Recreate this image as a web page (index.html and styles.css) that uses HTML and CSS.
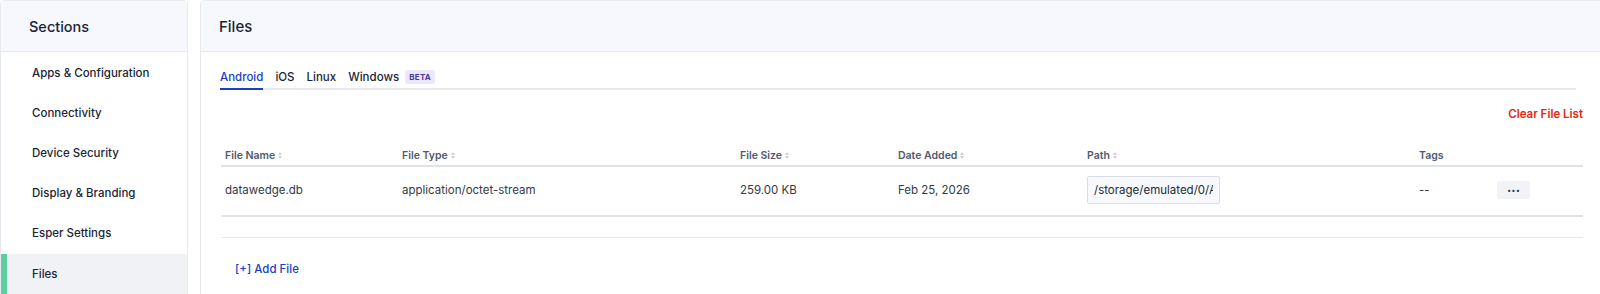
FILE: index.html
```html
<!DOCTYPE html>
<html lang="en">
<head>
  <meta charset="UTF-8" />
  <title>Files</title>
  <link rel="stylesheet" href="styles.css">
</head>
<body>

<div class="sidebar">
  <div class="card-head">Sections</div>
  <div class="nav-list">
    <div class="nav-item">Apps &amp; Configuration</div>
    <div class="nav-item">Connectivity</div>
    <div class="nav-item">Device Security</div>
    <div class="nav-item">Display &amp; Branding</div>
    <div class="nav-item">Esper Settings</div>
    <div class="nav-item active">Files</div>
  </div>
</div>

<div class="main">
  <div class="card-head main-head">Files</div>
  <div class="main-body">
    <div class="tabs">
      <div class="tab active">Android</div>
      <div class="tab">iOS</div>
      <div class="tab">Linux</div>
      <div class="tab">Windows <span class="beta">BETA</span></div>
    </div>

    <div class="toolbar">
      <span class="clear-link">Clear File List</span>
    </div>

    <div class="table">
      <div class="row head">
        <div class="cell">File Name <span class="sort"></span></div>
        <div class="cell">File Type <span class="sort"></span></div>
        <div class="cell">File Size <span class="sort"></span></div>
        <div class="cell">Date Added <span class="sort"></span></div>
        <div class="cell">Path <span class="sort"></span></div>
        <div class="cell">Tags</div>
        <div class="cell"></div>
      </div>
      <div class="row">
        <div class="cell">datawedge.db</div>
        <div class="cell">application/octet-stream</div>
        <div class="cell">259.00 KB</div>
        <div class="cell">Feb 25, 2026</div>
        <div class="cell"><input class="path-input" type="text" value="/storage/emulated/0/Android/data" readonly /></div>
        <div class="cell">--</div>
        <div class="cell"><button class="more-btn">&middot;&middot;&middot;</button></div>
      </div>
    </div>
    <div class="table-foot"></div>

    <div class="add-file">[+] Add File</div>
  </div>
</div>

</body>
</html>
```

FILE: styles.css
```css
* { margin: 0; padding: 0; box-sizing: border-box; }
body, html { height: 100%; overflow: hidden; }

body {
  display: flex;
  gap: 12px;
  background: #fff;
  font-family: Inter, "Noto Sans", sans-serif;
  color: #1b2437;
}

.sidebar, .main {
  border: 1px solid #e6e9ee;
  border-radius: 5px;
  background: #fff;
  height: 320px;
}

.sidebar { width: 188px; flex: none; }
.main { flex: 1; margin-right: -10px; }

.card-head {
  height: 51px;
  background: #f6f8fd;
  border-bottom: 1px solid #e6e9ee;
  border-radius: 5px 5px 0 0;
  padding-left: 28px;
  display: flex;
  align-items: center;
  font-size: 14.5px;
  font-weight: 500;
}
.main-head { padding-left: 18px; font-size: 15px; }

.nav-list { padding-top: 1px; }

.nav-item {
  height: 40px;
  display: flex;
  align-items: center;
  padding-left: 31px;
  font-size: 11.5px;
  font-weight: 500;
}
.nav-item.active {
  background: #f1f2f6;
  border-left: 6px solid #5bcf9f;
  padding-left: 25px;
  margin-top: 1px;
}

.main-body { padding: 0 26px 0 19px; }

.tabs {
  display: flex;
  gap: 12px;
  margin-top: 18px;
  margin-right: 7px;
  border-bottom: 2px solid #e7e8ee;
}
.tab {
  font-size: 11.5px;
  font-weight: 500;
  padding-bottom: 4px;
  margin-bottom: -2px;
  border-bottom: 2px solid transparent;
  display: flex;
  align-items: center;
  gap: 6px;
}
.tab.active { color: #1b3fc4; border-bottom-color: #1b3fc4; }

.beta {
  background: #ece7fb;
  color: #4a3a9e;
  font-size: 8px;
  font-weight: 700;
  letter-spacing: 0.3px;
  padding: 2px 4px;
  border-radius: 3px;
}

.toolbar {
  display: flex;
  justify-content: flex-end;
  height: 48px;
  align-items: center;
}
.clear-link {
  color: #e2280e;
  font-size: 11.5px;
  font-weight: 600;
}

.table { margin-left: 1px; }

.row {
  display: grid;
  grid-template-columns: 177px 338px 158px 189px 332px 78px 1fr;
  align-items: center;
}
.row.head {
  height: 29px;
  padding-top: 7px;
  border-bottom: 2px solid #dfe2e9;
}
.row:not(.head) {
  height: 50px;
  padding-bottom: 3px;
  border-bottom: 2px solid #dfe2e9;
}

.cell {
  padding-left: 4px;
  font-size: 11.5px;
  color: #333a46;
  display: flex;
  align-items: center;
}
.head .cell {
  font-size: 10.5px;
  font-weight: 600;
  color: #4f5a6e;
  gap: 3px;
}

.sort {
  display: inline-block;
  width: 5px;
  height: 7px;
  position: relative;
}
.sort::before, .sort::after {
  content: "";
  position: absolute;
  left: 0;
  border-left: 2.5px solid transparent;
  border-right: 2.5px solid transparent;
}
.sort::before { top: 0; border-bottom: 3px solid #cdd1d9; }
.sort::after { bottom: 0; border-top: 3px solid #cdd1d9; }

.path-input {
  width: 133px;
  height: 28px;
  border: 1px solid #d8dce3;
  border-radius: 2px;
  background: #f7f9fc;
  padding: 0 6px;
  font-family: Inter, "Noto Sans", sans-serif;
  font-size: 11.5px;
  color: #222a36;
  outline: none;
}

.more-btn {
  width: 33px;
  height: 18px;
  background: #f2f3f6;
  border: none;
  border-radius: 3px;
  font-size: 13px;
  font-weight: 700;
  line-height: 18px;
  color: #333a46;
  font-family: Inter, sans-serif;
}

.table-foot {
  margin-left: 1px;
  height: 21px;
  border-bottom: 1px solid #e7e8ec;
}

.add-file {
  color: #1b3fc4;
  font-size: 11.5px;
  font-weight: 500;
  margin: 24px 0 0 15px;
}
```
